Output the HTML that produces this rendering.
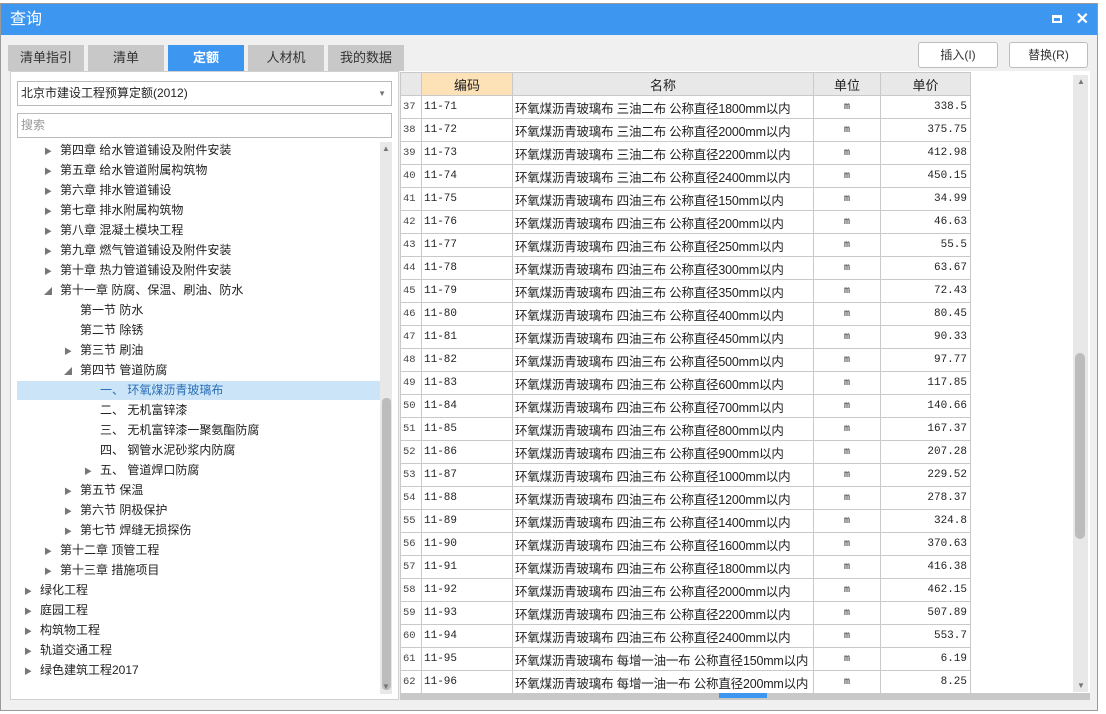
<!DOCTYPE html>
<html><head><meta charset="utf-8"><style>
*{margin:0;padding:0;box-sizing:border-box}
body{width:1106px;height:714px;overflow:hidden;background:#fff;font-family:"Liberation Sans","Noto Sans CJK SC","WenQuanYi Zen Hei",sans-serif;font-size:12px;color:#222;position:relative}
.win{position:absolute;left:0;top:3px;width:1098px;height:708px;background:#f0f0f0;border:1px solid #9a9a9a}
.title{position:absolute;left:0;top:0;width:100%;height:31px;background:#3d96f0;color:#fff;font-size:16px;line-height:31px;padding-left:9px}
.tab{position:absolute;top:41px;width:76px;height:26px;background:#c8c8c8;text-align:center;line-height:26px;font-size:13px;color:#333}
.tab.on{background:#3d96f0;color:#fff;font-weight:bold}
.btn{position:absolute;top:38px;height:26px;border:1px solid #bdbdbd;border-radius:3px;background:#fff;text-align:center;line-height:24px;font-size:12px;color:#333}
.left{position:absolute;left:9px;top:67px;width:389px;height:629px;background:#fff;border:1px solid #d0d0d0}
.sel{position:absolute;left:6px;top:9px;width:375px;height:25px;border:1px solid #bbb;line-height:23px;padding-left:3px;font-size:12px}
.srch{position:absolute;left:6px;top:41px;width:375px;height:25px;border:1px solid #bbb;line-height:23px;padding-left:3px;color:#999}
.ti{position:absolute;height:20px;line-height:20px;font-size:12px;white-space:nowrap;margin-top:-2px}
.ar{position:absolute;font-size:8px;color:#777;margin-top:-2px}
.vs{position:absolute;background:#e8e8e8}
.grid{position:absolute;left:399px;top:67px;width:690px;height:629px;background:#fff}
table{border-collapse:collapse;position:absolute;left:0;top:1px;table-layout:fixed}
td{border:1px solid #c9c9c9;height:23px;font-size:11px;white-space:nowrap;overflow:hidden;font-family:"Liberation Mono","Noto Sans CJK SC",monospace}
th{height:23px;background:#e8e8e8;border:1px solid #c9c9c9;font-weight:normal;font-size:13px}
td.n{color:#444;padding-left:2px;font-size:10.5px}
td.c{padding-left:2px}
td.m{padding-left:2px;font-family:"Liberation Sans","Noto Sans CJK SC",sans-serif;font-size:12.5px;letter-spacing:-0.2px}
td.u{text-align:center;font-size:10px}
td.p{text-align:right;padding-right:3px}
</style></head><body>
<div class="win">
<div class="title">查询<span style="position:absolute;right:35px;top:11px;width:10px;height:8px;border:2px solid #fff;border-top-width:3px"></span><span style="position:absolute;right:8px;top:0;font-size:16px;font-weight:bold">✕</span></div>
<div class="tab" style="left:7px">清单指引</div>
<div class="tab" style="left:87px">清单</div>
<div class="tab on" style="left:167px">定额</div>
<div class="tab" style="left:247px">人材机</div>
<div class="tab" style="left:327px">我的数据</div>
<div class="btn" style="left:917px;width:80px">插入(I)</div>
<div class="btn" style="left:1008px;width:79px">替换(R)</div>
<div class="left">
<div class="sel">北京市建设工程预算定额(2012)<span style="position:absolute;right:5px;top:0;font-size:8px;color:#777">▼</span></div>
<div class="srch">搜索</div>
<div class="ar" style="left:33px;top:76px">▶</div><div class="ti" style="left:49px;top:70px">第四章 给水管道铺设及附件安装</div>
<div class="ar" style="left:33px;top:96px">▶</div><div class="ti" style="left:49px;top:90px">第五章 给水管道附属构筑物</div>
<div class="ar" style="left:33px;top:116px">▶</div><div class="ti" style="left:49px;top:110px">第六章 排水管道铺设</div>
<div class="ar" style="left:33px;top:136px">▶</div><div class="ti" style="left:49px;top:130px">第七章 排水附属构筑物</div>
<div class="ar" style="left:33px;top:156px">▶</div><div class="ti" style="left:49px;top:150px">第八章 混凝土模块工程</div>
<div class="ar" style="left:33px;top:176px">▶</div><div class="ti" style="left:49px;top:170px">第九章 燃气管道铺设及附件安装</div>
<div class="ar" style="left:33px;top:196px">▶</div><div class="ti" style="left:49px;top:190px">第十章 热力管道铺设及附件安装</div>
<div class="ar" style="left:33px;top:216px">◢</div><div class="ti" style="left:49px;top:210px">第十一章 防腐、保温、刷油、防水</div>
<div class="ti" style="left:69px;top:230px">第一节 防水</div>
<div class="ti" style="left:69px;top:250px">第二节 除锈</div>
<div class="ar" style="left:53px;top:276px">▶</div><div class="ti" style="left:69px;top:270px">第三节 刷油</div>
<div class="ar" style="left:53px;top:296px">◢</div><div class="ti" style="left:69px;top:290px">第四节 管道防腐</div>
<div style="position:absolute;left:6px;top:309px;width:363px;height:19px;background:#cce4f7"></div>
<div class="ti" style="left:89px;top:310px;color:#2a6fb8">一、 环氧煤沥青玻璃布</div>
<div class="ti" style="left:89px;top:330px">二、 无机富锌漆</div>
<div class="ti" style="left:89px;top:350px">三、 无机富锌漆一聚氨酯防腐</div>
<div class="ti" style="left:89px;top:370px">四、 钢管水泥砂浆内防腐</div>
<div class="ar" style="left:73px;top:396px">▶</div><div class="ti" style="left:89px;top:390px">五、 管道焊口防腐</div>
<div class="ar" style="left:53px;top:416px">▶</div><div class="ti" style="left:69px;top:410px">第五节 保温</div>
<div class="ar" style="left:53px;top:436px">▶</div><div class="ti" style="left:69px;top:430px">第六节 阴极保护</div>
<div class="ar" style="left:53px;top:456px">▶</div><div class="ti" style="left:69px;top:450px">第七节 焊缝无损探伤</div>
<div class="ar" style="left:33px;top:476px">▶</div><div class="ti" style="left:49px;top:470px">第十二章 顶管工程</div>
<div class="ar" style="left:33px;top:496px">▶</div><div class="ti" style="left:49px;top:490px">第十三章 措施项目</div>
<div class="ar" style="left:13px;top:516px">▶</div><div class="ti" style="left:29px;top:510px">绿化工程</div>
<div class="ar" style="left:13px;top:536px">▶</div><div class="ti" style="left:29px;top:530px">庭园工程</div>
<div class="ar" style="left:13px;top:556px">▶</div><div class="ti" style="left:29px;top:550px">构筑物工程</div>
<div class="ar" style="left:13px;top:576px">▶</div><div class="ti" style="left:29px;top:570px">轨道交通工程</div>
<div class="ar" style="left:13px;top:596px">▶</div><div class="ti" style="left:29px;top:590px">绿色建筑工程2017</div>
<div class="vs" style="left:369px;top:70px;width:12px;height:552px"></div>
<div style="position:absolute;left:371px;top:326px;width:9px;height:292px;background:#bcbcbc;border-radius:4px"></div>
<div class="ar" style="left:371px;top:74px">▲</div><div class="ar" style="left:371px;top:612px">▼</div>
</div>
<div class="grid">
<table>
<colgroup><col style="width:21px"><col style="width:91px"><col style="width:301px"><col style="width:67px"><col style="width:90px"></colgroup>
<tr><th style="background:#e8e8e8"></th><th style="background:#fde2b8">编码</th><th>名称</th><th>单位</th><th>单价</th></tr>
<tr><td class="n">37</td><td class="c">11-71</td><td class="m">环氧煤沥青玻璃布 三油二布 公称直径1800mm以内</td><td class="u">m</td><td class="p">338.5</td></tr>
<tr><td class="n">38</td><td class="c">11-72</td><td class="m">环氧煤沥青玻璃布 三油二布 公称直径2000mm以内</td><td class="u">m</td><td class="p">375.75</td></tr>
<tr><td class="n">39</td><td class="c">11-73</td><td class="m">环氧煤沥青玻璃布 三油二布 公称直径2200mm以内</td><td class="u">m</td><td class="p">412.98</td></tr>
<tr><td class="n">40</td><td class="c">11-74</td><td class="m">环氧煤沥青玻璃布 三油二布 公称直径2400mm以内</td><td class="u">m</td><td class="p">450.15</td></tr>
<tr><td class="n">41</td><td class="c">11-75</td><td class="m">环氧煤沥青玻璃布 四油三布 公称直径150mm以内</td><td class="u">m</td><td class="p">34.99</td></tr>
<tr><td class="n">42</td><td class="c">11-76</td><td class="m">环氧煤沥青玻璃布 四油三布 公称直径200mm以内</td><td class="u">m</td><td class="p">46.63</td></tr>
<tr><td class="n">43</td><td class="c">11-77</td><td class="m">环氧煤沥青玻璃布 四油三布 公称直径250mm以内</td><td class="u">m</td><td class="p">55.5</td></tr>
<tr><td class="n">44</td><td class="c">11-78</td><td class="m">环氧煤沥青玻璃布 四油三布 公称直径300mm以内</td><td class="u">m</td><td class="p">63.67</td></tr>
<tr><td class="n">45</td><td class="c">11-79</td><td class="m">环氧煤沥青玻璃布 四油三布 公称直径350mm以内</td><td class="u">m</td><td class="p">72.43</td></tr>
<tr><td class="n">46</td><td class="c">11-80</td><td class="m">环氧煤沥青玻璃布 四油三布 公称直径400mm以内</td><td class="u">m</td><td class="p">80.45</td></tr>
<tr><td class="n">47</td><td class="c">11-81</td><td class="m">环氧煤沥青玻璃布 四油三布 公称直径450mm以内</td><td class="u">m</td><td class="p">90.33</td></tr>
<tr><td class="n">48</td><td class="c">11-82</td><td class="m">环氧煤沥青玻璃布 四油三布 公称直径500mm以内</td><td class="u">m</td><td class="p">97.77</td></tr>
<tr><td class="n">49</td><td class="c">11-83</td><td class="m">环氧煤沥青玻璃布 四油三布 公称直径600mm以内</td><td class="u">m</td><td class="p">117.85</td></tr>
<tr><td class="n">50</td><td class="c">11-84</td><td class="m">环氧煤沥青玻璃布 四油三布 公称直径700mm以内</td><td class="u">m</td><td class="p">140.66</td></tr>
<tr><td class="n">51</td><td class="c">11-85</td><td class="m">环氧煤沥青玻璃布 四油三布 公称直径800mm以内</td><td class="u">m</td><td class="p">167.37</td></tr>
<tr><td class="n">52</td><td class="c">11-86</td><td class="m">环氧煤沥青玻璃布 四油三布 公称直径900mm以内</td><td class="u">m</td><td class="p">207.28</td></tr>
<tr><td class="n">53</td><td class="c">11-87</td><td class="m">环氧煤沥青玻璃布 四油三布 公称直径1000mm以内</td><td class="u">m</td><td class="p">229.52</td></tr>
<tr><td class="n">54</td><td class="c">11-88</td><td class="m">环氧煤沥青玻璃布 四油三布 公称直径1200mm以内</td><td class="u">m</td><td class="p">278.37</td></tr>
<tr><td class="n">55</td><td class="c">11-89</td><td class="m">环氧煤沥青玻璃布 四油三布 公称直径1400mm以内</td><td class="u">m</td><td class="p">324.8</td></tr>
<tr><td class="n">56</td><td class="c">11-90</td><td class="m">环氧煤沥青玻璃布 四油三布 公称直径1600mm以内</td><td class="u">m</td><td class="p">370.63</td></tr>
<tr><td class="n">57</td><td class="c">11-91</td><td class="m">环氧煤沥青玻璃布 四油三布 公称直径1800mm以内</td><td class="u">m</td><td class="p">416.38</td></tr>
<tr><td class="n">58</td><td class="c">11-92</td><td class="m">环氧煤沥青玻璃布 四油三布 公称直径2000mm以内</td><td class="u">m</td><td class="p">462.15</td></tr>
<tr><td class="n">59</td><td class="c">11-93</td><td class="m">环氧煤沥青玻璃布 四油三布 公称直径2200mm以内</td><td class="u">m</td><td class="p">507.89</td></tr>
<tr><td class="n">60</td><td class="c">11-94</td><td class="m">环氧煤沥青玻璃布 四油三布 公称直径2400mm以内</td><td class="u">m</td><td class="p">553.7</td></tr>
<tr><td class="n">61</td><td class="c">11-95</td><td class="m">环氧煤沥青玻璃布 每增一油一布 公称直径150mm以内</td><td class="u">m</td><td class="p">6.19</td></tr>
<tr><td class="n">62</td><td class="c">11-96</td><td class="m">环氧煤沥青玻璃布 每增一油一布 公称直径200mm以内</td><td class="u">m</td><td class="p">8.25</td></tr>
</table>
<div style="position:absolute;left:0;top:622px;width:690px;height:7px;background:#c8c8c8"></div>
<div style="position:absolute;left:319px;top:622px;width:48px;height:5px;background:#3d96f0"></div>
<div class="vs" style="left:673px;top:4px;width:15px;height:617px"></div>
<div style="position:absolute;left:675px;top:282px;width:10px;height:186px;background:#bcbcbc;border-radius:5px"></div>
<div class="ar" style="left:677px;top:8px">▲</div><div class="ar" style="left:677px;top:612px">▼</div>
</div>
</div>
</body></html>
